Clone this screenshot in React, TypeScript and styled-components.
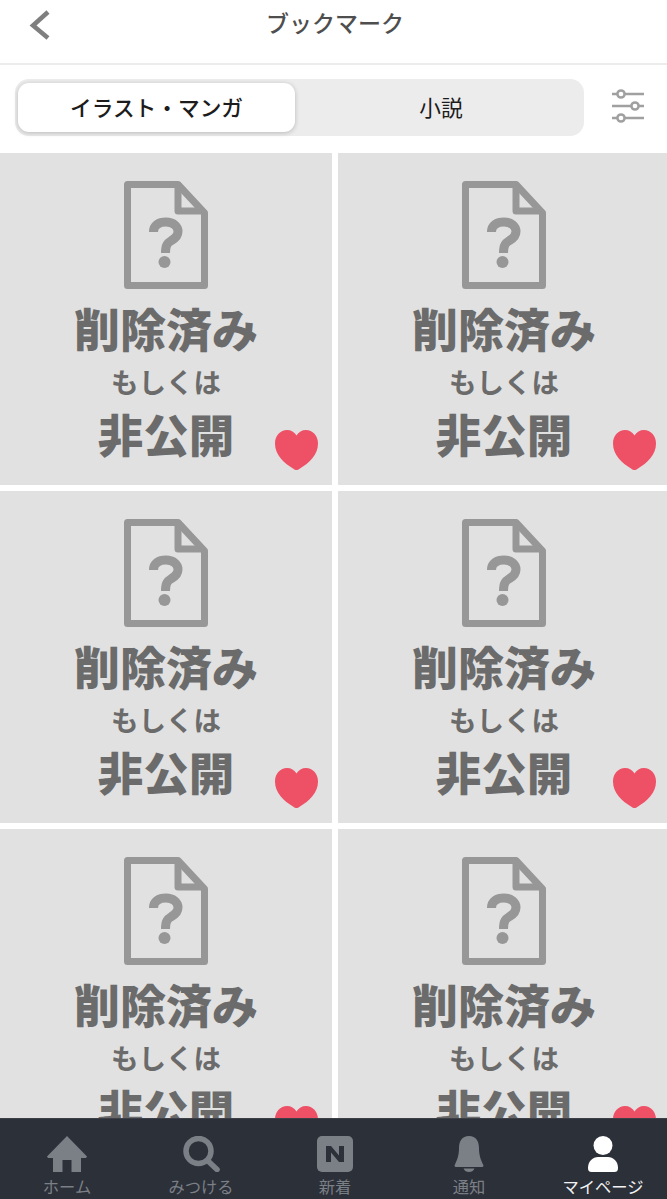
import React from "react";
import styled, { createGlobalStyle } from "styled-components";

const Global = createGlobalStyle`
  html, body { margin: 0; padding: 0; background: #fff; }
  body { font-family: "Noto Sans CJK JP", "Noto Sans", sans-serif; }
`;

const Page = styled.div`
  position: relative;
  width: 667px;
  height: 1199px;
  overflow: hidden;
  background: #fff;
`;

const Inner = styled.div`
  position: relative;
  width: 670px;
  height: 1199px;
`;

const Header = styled.header`
  height: 63px;
  border-bottom: 2px solid #ececec;
  display: flex;
  align-items: flex-start;
  justify-content: center;
  position: relative;
`;

const BackIcon = styled.svg`
  position: absolute;
  left: 28px;
  top: 8px;
`;

const Title = styled.h1`
  margin: 5px 0 0;
  font-size: 23px;
  line-height: 34px;
  font-weight: 500;
  color: #4e4e4e;
`;

const Controls = styled.div`
  height: 88px;
  padding: 14px 0 0 15px;
  box-sizing: border-box;
  display: flex;
  align-items: flex-start;
`;

const Segment = styled.div`
  width: 569px;
  height: 57px;
  box-sizing: border-box;
  padding: 4px 3px;
  border-radius: 14px;
  background: #ececec;
  display: grid;
  grid-template-columns: 277px 1fr;
`;

const SegmentTab = styled.div<{ $active?: boolean }>`
  display: flex;
  align-items: center;
  justify-content: center;
  border-radius: 11px;
  font-size: 21.7px;
  font-weight: ${(p) => (p.$active ? 500 : 400)};
  color: #1c1c1c;
  padding: 0 0 3px ${(p) => (p.$active ? 0 : 6)}px;
  background: ${(p) => (p.$active ? "#fff" : "transparent")};
  box-shadow: ${(p) => (p.$active ? "0 1px 5px rgba(0,0,0,.22)" : "none")};
`;

const FilterIcon = styled.svg`
  margin: 10px 0 0 28px;
`;

const Grid = styled.div`
  display: grid;
  grid-template-columns: 332px 332px;
  grid-auto-rows: 332px;
  gap: 6px;
`;

const Tile = styled.article`
  position: relative;
  background: #e1e1e1;
  display: flex;
  flex-direction: column;
  align-items: center;
  padding-top: 28px;
  box-sizing: border-box;
  color: #6b6b6b;
`;

const DocIcon = styled.svg`
  flex: none;
`;

const Big = styled.div`
  margin-top: 12px;
  font-size: 46px;
  line-height: 52px;
  font-weight: 900;
  white-space: nowrap;
`;

const Small = styled.div`
  margin-top: 12px;
  font-size: 27.5px;
  line-height: 32px;
  font-weight: 700;
  white-space: nowrap;
`;

const Big2 = styled(Big)`
  margin-top: 10px;
  font-size: 45.5px;
`;

const Heart = styled.svg`
  position: absolute;
  right: 14px;
  bottom: 15px;
`;

const TabBar = styled.nav`
  position: absolute;
  left: 0;
  right: 0;
  bottom: 0;
  height: 81px;
  box-sizing: border-box;
  border-top: 1px solid #3c3f47;
  background: #2c3039;
  display: grid;
  grid-template-columns: repeat(5, 1fr);
`;

const TabItem = styled.div<{ $active?: boolean }>`
  display: flex;
  flex-direction: column;
  align-items: center;
  padding-top: 17px;
  color: ${(p) => (p.$active ? "#fff" : "#7b7f86")};
`;

const TabLabel = styled.span<{ $active?: boolean }>`
  margin-top: 2px;
  font-size: 16.3px;
  line-height: 24px;
  font-weight: 400;
  white-space: nowrap;
  color: ${(p) => (p.$active ? "#f2f2f2" : "#7b7f86")};
`;

const TabSvg = styled.svg`
  display: block;
`;

const Document = () => (
  <DocIcon width="84" height="108" viewBox="0 0 84 108" fill="none">
    <path
      d="M3.5 3.5H54L80.5 32V104.5H3.5Z"
      stroke="#979797"
      strokeWidth="7"
      strokeLinejoin="round"
    />
    <path d="M54 4V30H80" stroke="#979797" strokeWidth="7" strokeLinejoin="round" />
    <path
      d="M29.5 51C29.5 44 35 41 42 41C49 41 54 45 54 50.5C54 55 51 57.5 47.5 59.5C43.5 62 41.5 64 41.5 72"
      stroke="#979797"
      strokeWidth="9"
    />
    <circle cx="40.5" cy="81" r="6" fill="#979797" />
  </DocIcon>
);

const HeartIcon = () => (
  <Heart width="43" height="40" viewBox="0 0 43 40">
    <path
      d="M21.5 40C20.5 40 19.5 39.5 18 38.5C9 33 0 25 0 13.5C0 5.5 5.5 0 12 0C16 0 19.5 2 21.5 5.5C23.5 2 27 0 31 0C37.5 0 43 5.5 43 13.5C43 25 34 33 25 38.5C23.5 39.5 22.5 40 21.5 40Z"
      fill="#ee5066"
    />
  </Heart>
);

const Card = () => (
  <Tile>
    <Document />
    <Big>削除済み</Big>
    <Small>もしくは</Small>
    <Big2>非公開</Big2>
    <HeartIcon />
  </Tile>
);

const HomeIcon = () => (
  <TabSvg width="40" height="36" viewBox="0 0 40 36" fill="currentColor">
    <path d="M20 0L40 20.5L39 22H34V36H24.5V24H15.5V36H6V22H1L0 20.5Z" />
  </TabSvg>
);

const SearchIcon = () => (
  <TabSvg width="38" height="36" viewBox="0 0 38 36" fill="none" stroke="currentColor">
    <circle cx="16.5" cy="15" r="12.5" strokeWidth="5.5" />
    <path d="M25.5 24.5L35 33.5" strokeWidth="5.5" strokeLinecap="round" />
  </TabSvg>
);

const NewsIcon = () => (
  <TabSvg width="36" height="36" viewBox="0 0 36 36">
    <rect width="36" height="36" rx="5" fill="currentColor" />
    <path d="M9 26V10H14L22 19.5V10H27V26H22L14 16.5V26Z" fill="#2c3039" />
  </TabSvg>
);

const BellIcon = () => (
  <TabSvg width="30" height="36" viewBox="0 0 30 36" fill="currentColor">
    <path d="M15 0C22 0 25 5 25 12C25 20 27 24 29.5 29.5C29.5 30.5 28.5 31 27.5 31H2.5C1.5 31 .5 30.5 .5 29.5C3 24 5 20 5 12C5 5 8 0 15 0Z" />
    <path d="M9.5 32.5H20.5C19.5 35 17.5 36 15 36C12.5 36 10.5 35 9.5 32.5Z" />
  </TabSvg>
);

const PersonIcon = () => (
  <TabSvg width="30" height="36" viewBox="0 0 30 36" fill="currentColor">
    <circle cx="15" cy="9.5" r="9.5" />
    <path d="M0 32C0 25 5 21 10 21H20C25 21 30 25 30 32C30 35 28.5 36 26.5 36H3.5C1.5 36 0 35 0 32Z" />
  </TabSvg>
);

const tabs = [
  { label: "ホーム", icon: <HomeIcon /> },
  { label: "みつける", icon: <SearchIcon /> },
  { label: "新着", icon: <NewsIcon /> },
  { label: "通知", icon: <BellIcon /> },
  { label: "マイページ", icon: <PersonIcon />, active: true },
];

export default function App() {
  return (
    <Page>
      <Global />
      <Inner>
        <Header>
          <BackIcon width="24" height="34" viewBox="0 0 24 34" fill="none">
            <path d="M20 4L5 17.5L20 30" stroke="#7f7f7f" strokeWidth="4.5" />
          </BackIcon>
          <Title>ブックマーク</Title>
        </Header>
        <Controls>
          <Segment>
            <SegmentTab $active>イラスト・マンガ</SegmentTab>
            <SegmentTab>小説</SegmentTab>
          </Segment>
          <FilterIcon width="32" height="34" viewBox="0 0 32 34" fill="none" stroke="#a0a0a0" strokeWidth="2.5">
            <path d="M0 5H5M13 5H32" />
            <circle cx="9" cy="5" r="3.6" />
            <path d="M0 17H19M27 17H32" />
            <circle cx="23" cy="17" r="3.6" />
            <path d="M0 29H5M13 29H32" />
            <circle cx="9" cy="29" r="3.6" />
          </FilterIcon>
        </Controls>
        <Grid>
          {Array.from({ length: 6 }, (_, i) => (
            <Card key={i} />
          ))}
        </Grid>
        <TabBar>
          {tabs.map((t) => (
            <TabItem key={t.label} $active={t.active}>
              {t.icon}
              <TabLabel $active={t.active}>{t.label}</TabLabel>
            </TabItem>
          ))}
        </TabBar>
      </Inner>
    </Page>
  );
}
